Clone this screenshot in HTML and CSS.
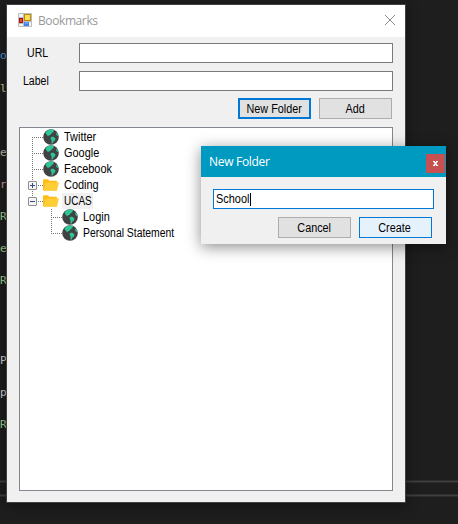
FILE: index.html
```html
<!DOCTYPE html>
<html lang="en">
<head>
<meta charset="utf-8">
<title>Bookmarks</title>
<link rel="stylesheet" href="styles.css">
</head>
<body>
<svg class="symbols" aria-hidden="true">
  <symbol id="globe" viewBox="0 0 16 16">
    <circle cx="8" cy="8" r="7.8" fill="#404243"/>
    <path d="M2.4 3.6 4.7 1.3 8.5.3 11 .9 10.2 3.2 8.6 4.2 7.4 6 5.8 6.2 5.9 7.3 4.3 6.5 3.2 5ZM7.8 8.2l2-.6 2.6 1.7-.4 2.2-1.6 1-.8 2.2-1.1-.4.1-2.9-1-1.6ZM13.2 3.6l1.2.4.9 2.2-.9.9-1.1-1.3Z" fill="#2dc596"/>
  </symbol>
  <symbol id="folder" viewBox="0 0 16 16">
    <path d="M0 3.2Q0 2.2.8 2.2H5l1.3 1.5h6.8q.9 0 .9.9v9H.8Q0 13.6 0 12.7Z" fill="#ffbd16"/>
    <path d="M2.8 5.4H16l-2.1 8.4H.5Z" fill="#ffcd38"/>
  </symbol>
  <symbol id="plus" viewBox="0 0 9 9">
    <rect x=".5" y=".5" width="8" height="8" rx=".5" fill="#f5f5f5" stroke="#8e8e8e"/>
    <path d="M2 4.5h5M4.5 2v5" stroke="#344b8c"/>
  </symbol>
  <symbol id="minus" viewBox="0 0 9 9">
    <rect x=".5" y=".5" width="8" height="8" rx=".5" fill="#f5f5f5" stroke="#8e8e8e"/>
    <path d="M2 4.5h5" stroke="#344b8c"/>
  </symbol>
</svg>

<div class="editor">
  <span class="code keyword c1">ob</span>
  <span class="code string c2">lt</span>
  <span class="code string c3">ey</span>
  <span class="code plain c4">r</span>
  <span class="code green c5">Re</span>
  <span class="code green c6">ey</span>
  <span class="code green c7">Re</span>
  <span class="code plain c8">Pr</span>
  <span class="code plain c9">pe</span>
  <span class="code green c10">Re</span>
  <div class="splitter s1"></div>
  <div class="splitter s2"></div>
</div>

<main class="window">
  <header class="titlebar">
    <svg class="app-icon" width="14" height="14" viewBox="0 0 14 14">
      <path d="M.5.5h13v13H.5ZM5.5.5v13M.5 4.5h5M.5 10.5h5M5.5 8.5h8" fill="#f4f4f4" stroke="#bcbcbc"/>
      <rect x="6.5" y="1.5" width="6" height="6" fill="#ffdc58" stroke="#b78a08"/>
      <rect x="1.5" y="5.5" width="3" height="4" fill="#e4502e" stroke="#a9140c"/>
      <rect x="6" y="9" width="5" height="4" fill="#3d83e8"/>
      <path d="M7 10h3" stroke="#8dbcff"/>
    </svg>
    <h1>Bookmarks</h1>
    <svg class="close" width="12" height="12" viewBox="0 0 12 12"><path d="m1 1 10 10M11 1 1 11" stroke="#8a8a8a"/></svg>
  </header>
  <form class="form">
    <label class="field"><span class="name"><span class="t url">URL</span></span><span class="input"></span></label>
    <label class="field"><span class="name"><span class="t lab">Label</span></span><span class="input"></span></label>
    <div class="actions">
      <button type="button" class="default"><span class="t">New Folder</span></button>
      <button type="button"><span class="t">Add</span></button>
    </div>
  </form>
  <section class="tree">
    <div class="row"><svg class="gutter" width="15" height="16"><path class="dots" d="M4.5 8v8M4 8.5h11"/></svg><svg class="icon"><use href="#globe"/></svg><span class="t">Twitter</span></div>
    <div class="row"><svg class="gutter" width="15" height="16"><path class="dots" d="M4.5 0v16M4 8.5h11"/></svg><svg class="icon"><use href="#globe"/></svg><span class="t">Google</span></div>
    <div class="row"><svg class="gutter" width="15" height="16"><path class="dots" d="M4.5 0v16M4 8.5h11"/></svg><svg class="icon"><use href="#globe"/></svg><span class="t">Facebook</span></div>
    <div class="row"><svg class="gutter" width="15" height="16"><path class="dots" d="M4.5 0v16M10 8.5h5"/><use href="#plus" y="4" width="9" height="9"/></svg><svg class="icon"><use href="#folder"/></svg><span class="t">Coding</span></div>
    <div class="row"><svg class="gutter" width="15" height="16"><path class="dots" d="M4.5 0v4M10 8.5h5"/><use href="#minus" y="4" width="9" height="9"/></svg><svg class="icon"><use href="#folder"/></svg><span class="selected"><span class="t">UCAS</span></span></div>
    <div class="row"><svg class="gutter" width="34" height="16"><path class="dots" d="M23.5 0v16M23 8.5h11"/></svg><svg class="icon"><use href="#globe"/></svg><span class="t">Login</span></div>
    <div class="row"><svg class="gutter" width="34" height="16"><path class="dots" d="M23.5 0v8M23 8.5h11"/></svg><svg class="icon"><use href="#globe"/></svg><span class="t long">Personal Statement</span></div>
  </section>
</main>

<section class="dialog">
  <header class="dialog-title">
    <h2>New Folder</h2>
    <span class="dialog-close"><svg width="5" height="5" viewBox="0 0 5 5"><path d="M0 .5h2M3 .5h2M0 4.5h2M3 4.5h2" stroke="#fff"/><path d="m1 .5 3 4M4 .5l-3 4" stroke="#fff" stroke-width="1.3"/></svg></span>
  </header>
  <div class="dialog-body">
    <div class="entry"><span class="t">School</span><i class="caret"></i></div>
    <div class="dialog-actions">
      <button type="button"><span class="t">Cancel</span></button>
      <button type="button" class="hot"><span class="t">Create</span></button>
    </div>
  </div>
</section>
</body>
</html>
```
FILE: styles.css
```css
* { box-sizing: border-box; }
body {
  margin: 0;
  width: 458px;
  height: 524px;
  position: relative;
  overflow: hidden;
  background: #1e1e1e;
  color: #000;
  font: 12px/16px "Liberation Sans", Arial, sans-serif;
}
.symbols { position: absolute; width: 0; height: 0; }
h1, h2 { margin: 0; font-weight: 400; }
svg { display: block; flex: none; }
.t { display: inline-block; white-space: nowrap; transform: scaleX(.91); transform-origin: left; }

.editor { position: absolute; inset: 0; }
.code { position: absolute; left: 0; font: 11px/16px "DejaVu Sans Mono", monospace; letter-spacing: -1.4px; }
.keyword { color: #569cd6; }
.string { color: #c0cf8e; }
.green { color: #a0cc88; }
.plain { color: #d0d0d0; }
.c1 { top: 48px; }
.c2 { top: 81px; }
.c3 { top: 145px; color: #c4bda6; }
.c4 { top: 177px; color: #c8a48b; }
.c5 { top: 209px; }
.c6 { top: 241px; }
.c7 { top: 273px; }
.c8 { top: 353px; }
.c9 { top: 385px; }
.c10 { top: 417px; }
.splitter { position: absolute; left: 0; right: 0; height: 3px; background: #3f3f40; border: solid #2d2d2e; border-width: 1px 0; }
.s1 { top: 480px; }
.s2 { top: 494px; }

.window {
  position: absolute;
  left: 6px;
  top: 4px;
  width: 400px;
  height: 499px;
  display: flex;
  flex-direction: column;
  border: 1px solid #414141;
  background: #f0f0f0;
  box-shadow: 0 3px 12px rgba(0,0,0,.45);
}
.titlebar { height: 32px; display: flex; align-items: center; padding: 0 9px 0 11px; background: #fff; }
.app-icon { margin-top: -2px; }
.titlebar h1 { margin: 0 0 0 6px; color: #999; font: 12px/16px "Open Sans", sans-serif; letter-spacing: -.4px; }
.close { margin: -2px 0 0 auto; }
.form { padding: 6px 12px 0 0; }
.field { display: flex; height: 20px; margin-bottom: 8px; }
.name { width: 72px; padding-top: 2px; }
.url { margin-left: 20px; transform: scaleX(.88); }
.lab { margin-left: 16px; transform: scaleX(.88); }
.input { flex: 1; border: 1px solid #7a7a7a; background: #fff; }
.actions { display: flex; justify-content: flex-end; gap: 8px; padding-right: 1px; margin-top: -1px; }
button {
  width: 73px;
  height: 21px;
  padding: 0;
  border: 1px solid #adadad;
  background: #e1e1e1;
  color: #000;
  font: inherit;
}
button .t { transform: translateX(-.5px) scaleX(.9); transform-origin: center; }
.default { border: 2px solid #0078d7; }
.tree { flex: 1; margin: 8px 12px 11px; padding: 1px 0 0 8px; border: 1px solid #828790; background: #fff; }
.row { display: flex; height: 16px; align-items: center; }
.dots { fill: none; stroke: #777; stroke-dasharray: 1 1; }
.icon { width: 16px; height: 16px; margin-right: 5px; }
.long { transform: scaleX(.865); }
.selected { width: 31px; height: 16px; margin-left: -2px; padding-left: 2px; background: #f0f0f0; }
.selected .t { transform: scaleX(.83); }

.dialog { position: absolute; left: 201px; top: 146px; width: 245px; height: 98px; background: #f0f0f0; box-shadow: 0 3px 14px rgba(0,0,0,.45); }
.dialog-title { height: 31px; display: flex; align-items: flex-start; justify-content: space-between; padding: 8px 1px 0 8px; background: #0099bf; color: #fff; }
.dialog-title h2 { font: 12px/16px "Open Sans", sans-serif; letter-spacing: -.3px; }
.dialog-close { width: 19px; height: 19px; display: grid; place-items: center; background: #c75050; }
.dialog-body { padding: 12px 12px 0; }
.entry { height: 20px; display: flex; align-items: center; padding-left: 2px; border: 1px solid #0078d7; background: #fff; }
.caret { width: 1px; height: 13px; margin-left: -3px; background: #000; }
.dialog-actions { display: flex; justify-content: flex-end; gap: 8px; padding-right: 2px; margin-top: 8px; }
.hot { border-color: #0078d7; background: #e5f1fb; }
```
